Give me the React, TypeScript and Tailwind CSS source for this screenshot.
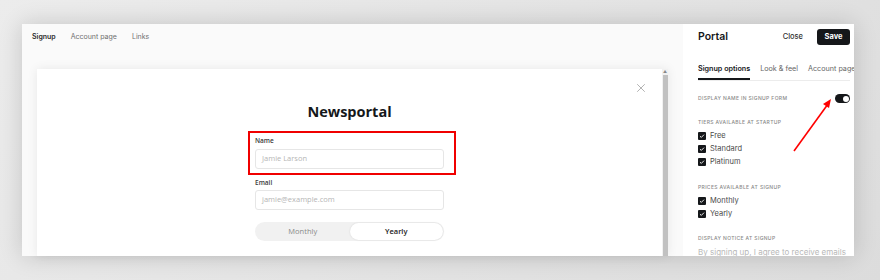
import { X } from "lucide-react";

function Check({ label }: { label: string }) {
  return (
    <div className="flex h-[13px] items-center gap-[4px]">
      <span className="grid size-[8px] place-items-center rounded-[1px] bg-[#15171a]">
        <svg viewBox="0 0 8 8" className="size-[6px]">
          <path d="M1.3 4.2 3.1 5.9 6.7 2.2" fill="none" stroke="white" strokeWidth="1.2" />
        </svg>
      </span>
      <span className="text-[7.5px] text-[#4a4a4a]">{label}</span>
    </div>
  );
}

function SectionTitle({ children }: { children: string }) {
  return <div className="text-[5px] leading-[7px] font-medium uppercase tracking-[0.35px] text-[#8a8a8a]">{children}</div>;
}

export default function App() {
  return (
    <div
      className="h-[280px] w-[880px] overflow-hidden bg-[linear-gradient(135deg,#ececec,#dcdcdc)] pl-[22px] pt-[24px]"
      style={{ fontFamily: "Inter, 'Liberation Sans', sans-serif" }}
    >
      <div className="flex h-[232px] w-[832px] shadow-[0_0_22px_rgba(0,0,0,0.16)]">
        {/* preview area */}
        <div className="flex w-[661px] flex-col bg-[#fafafa]">
          <nav className="flex h-[45px] items-start gap-[15px] pl-[10px] pt-[8px] text-[7px] leading-[9px]">
            <span className="font-semibold text-[#2a2a2a]">Signup</span>
            <span className="text-[#707070]">Account page</span>
            <span className="text-[#707070]">Links</span>
          </nav>
          <div className="mx-[15px] flex flex-1 bg-white shadow-[0_0_10px_rgba(0,0,0,0.08)]">
            <div className="relative flex flex-1 flex-col items-center pt-[33px]" style={{ fontFamily: "'Open Sans', sans-serif" }}>
              <X className="absolute right-[14px] top-[12px] size-[14px] text-[#9a9a9a]" strokeWidth={1.3} />
              <h1 className="text-[14.5px] leading-[20px] font-bold text-[#15171a]">Newsportal</h1>
              <div className="mt-[8px] flex w-[189px] flex-col">
                <div className="relative pt-[6px]">
                  <div className="pointer-events-none absolute -left-[7px] -right-[12px] top-[1px] -bottom-[6px] border-2 border-[#f00000]" />
                  <label className="block text-[6.5px] leading-[9px] font-semibold text-[#3a3a3a]">Name</label>
                  <div className="mt-[4px] flex h-[20px] items-center rounded-[3px] border border-[#e6e6e6] px-[6px] text-[7.5px] text-[#b5b5b5]">
                    Jamie Larson
                  </div>
                </div>
                <label className="mt-[9px] block text-[6.5px] leading-[9px] font-semibold text-[#3a3a3a]">Email</label>
                <div className="mt-[3px] flex h-[20px] items-center rounded-[3px] border border-[#e6e6e6] px-[6px] text-[7.5px] text-[#b5b5b5]">
                  jamie@example.com
                </div>
                <div className="mt-[12px] flex h-[19px] rounded-full bg-[#f1f1f1] p-[1px] text-[7.5px]">
                  <div className="flex flex-1 items-center justify-center font-medium text-[#8a8a8a]">Monthly</div>
                  <div className="flex flex-1 items-center justify-center rounded-full bg-white font-semibold text-[#222] shadow-[0_0_2px_rgba(0,0,0,0.12)]">
                    Yearly
                  </div>
                </div>
              </div>
            </div>
            <div className="flex w-[6px] flex-col bg-[#f1f1f1]">
              <div className="h-[6px] text-center text-[4px] leading-[6px] text-[#888]">▲</div>
              <div className="mx-[0.5px] flex-1 bg-[#c1c1c1]" />
            </div>
          </div>
        </div>

        {/* settings panel */}
        <div className="relative w-[171px] overflow-hidden bg-white pl-[15px] pr-[4px]">
          <div className="flex h-[26px] items-center">
            <h2 className="flex-1 text-[10.5px] font-semibold text-[#15171a]">Portal</h2>
            <span className="mr-[14px] text-[7.5px] font-medium text-[#333]">Close</span>
            <button className="h-[16px] w-[33px] rounded-[3px] bg-[#15171a] text-[7.5px] font-bold text-white">Save</button>
          </div>
          <div className="mt-[14px] flex gap-[10px] whitespace-nowrap border-b border-[#ececec] text-[7.2px] leading-[9px]">
            <span className="border-b-2 border-[#15171a] pb-[5px] font-semibold text-[#15171a]">Signup options</span>
            <span className="text-[#666]">Look &amp; feel</span>
            <span className="text-[#666]">Account page</span>
          </div>
          <div className="mt-[13px] flex h-[9px] items-center justify-between">
            <SectionTitle>Display name in signup form</SectionTitle>
            <span className="flex h-[9px] w-[15px] items-center justify-end rounded-full bg-[#15171a] px-[1.5px]">
              <span className="size-[6px] rounded-full bg-white" />
            </span>
          </div>
          <div className="mt-[16px]">
            <SectionTitle>Tiers available at startup</SectionTitle>
          </div>
          <div className="mt-[3px]">
            <Check label="Free" />
            <Check label="Standard" />
            <Check label="Platinum" />
          </div>
          <div className="mt-[16px]">
            <SectionTitle>Prices available at signup</SectionTitle>
          </div>
          <div className="mt-[3px]">
            <Check label="Monthly" />
            <Check label="Yearly" />
          </div>
          <div className="mt-[15px]">
            <SectionTitle>Display notice at signup</SectionTitle>
          </div>
          <div className="mt-[4px] whitespace-nowrap text-[8px] leading-[12px] text-[#b8b8b8]">By signing up, I agree to receive emails</div>

          <svg className="pointer-events-none absolute left-0 top-0" width="171" height="232" viewBox="0 0 171 232">
            <line x1="111" y1="127" x2="145" y2="80" stroke="#f00" strokeWidth="1.6" />
            <path d="M148 75 L140 80 L146 84 Z" fill="#f00" />
          </svg>
        </div>
      </div>
    </div>
  );
}
